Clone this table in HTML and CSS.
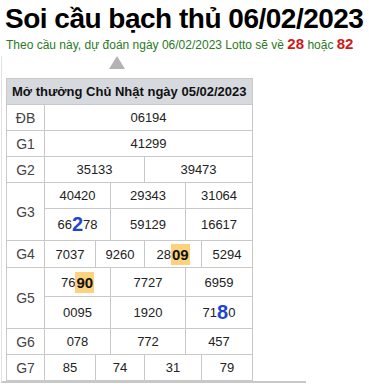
FILE: index.html
```html
<!DOCTYPE html>
<html lang="vi">

<head>
    <meta charset="UTF-8">
    <meta name="viewport" content="width=device-width, initial-scale=1.0">
    <title>Soi cầu bạch thủ 06/02/2023</title>
    <link rel="stylesheet" href="styles.css">
</head>

<body>
    <!-- Tiêu đề -->
    <h1 class="title">Soi cầu bạch thủ 06/02/2023</h1>
    <p class="predict">Theo cầu này, dự đoán ngày 06/02/2023 Lotto sẽ về <b>28</b> hoặc <b>82</b></p>

    <!-- Bảng kết quả -->
    <div class="result-box">
        <div class="arrow"></div>
        <div class="result">
            <div class="head">Mở thưởng Chủ Nhật ngày 05/02/2023</div>

            <div class="label">ĐB</div>
            <div class="cell s6">06194</div>

            <div class="label">G1</div>
            <div class="cell s6">41299</div>

            <div class="label">G2</div>
            <div class="cell s3">35133</div>
            <div class="cell s3">39473</div>

            <div class="label r2">G3</div>
            <div class="cell s2">40420</div>
            <div class="cell s2">29343</div>
            <div class="cell s2">31064</div>
            <div class="cell s2">66<span class="hit">2</span>78</div>
            <div class="cell s2">59129</div>
            <div class="cell s2">16617</div>

            <div class="label">G4</div>
            <div class="cell">7037</div>
            <div class="cell s2">9260</div>
            <div class="cell s2">28<span class="mark">09</span></div>
            <div class="cell">5294</div>

            <div class="label r2">G5</div>
            <div class="cell s2">76<span class="mark">90</span></div>
            <div class="cell s2">7727</div>
            <div class="cell s2">6959</div>
            <div class="cell s2">0095</div>
            <div class="cell s2">1920</div>
            <div class="cell s2">71<span class="hit">8</span>0</div>

            <div class="label">G6</div>
            <div class="cell s2">078</div>
            <div class="cell s2">772</div>
            <div class="cell s2">457</div>

            <div class="label">G7</div>
            <div class="cell">85</div>
            <div class="cell s2">74</div>
            <div class="cell s2">31</div>
            <div class="cell">79</div>
        </div>
    </div>
</body>

</html>
```
FILE: styles.css
```css
body {
    font-family: "Liberation Sans", Arial, sans-serif;
    margin: 0;
    padding: 0;
    background-color: #fff;
    color: #222;
}

/* Tiêu đề */
.title {
    margin: 0;
    padding: 2px 0 0 5px;
    font-size: 28px;
    line-height: 34px;
    letter-spacing: -0.5px;
    white-space: nowrap;
    color: #000;
}

.predict {
    margin: 0 0 0 6px;
    font-size: 12px;
    line-height: 16px;
    white-space: nowrap;
    color: #2b7a1d;
}

.predict b {
    font-size: 15px;
    color: #d01818;
}

/* Khung kết quả */
.result-box {
    margin: 3px 0 0 1px;
    border-left: 1px solid #e2e2e2;
    border-bottom: 2px solid #c8c8c8;
    padding: 0 0 0 4px;
    width: 300px;
}

.arrow {
    width: 0;
    height: 0;
    margin-left: 103px;
    border-left: 8px solid transparent;
    border-right: 8px solid transparent;
    border-bottom: 13px solid #b3b3b3;
    margin-bottom: 9px;
}

.result {
    display: grid;
    grid-template-columns: 37px 50px 14px 33px 40px 15px 50px;
    grid-template-rows: 25px 25px 25px 25px 25px 31px 26px 28px 31px 25px 25px;
    gap: 1px;
    padding: 1px;
    background-color: #c9c9c9;
    width: max-content;
    font-size: 13px;
}

.result .head {
    grid-column: span 7;
    background-color: #d6d9de;
    font-weight: bold;
    color: #111;
    display: flex;
    align-items: center;
    padding-left: 5px;
}

.result .label {
    background-color: #fff;
    display: flex;
    align-items: center;
    justify-content: center;
    font-size: 14px;
    color: #444;
}

.result .r2 {
    grid-row: span 2;
}

.result .cell {
    background-color: #fff;
    display: flex;
    align-items: center;
    justify-content: center;
    color: #222;
}

.result .s2 {
    grid-column: span 2;
}

.result .s3 {
    grid-column: span 3;
}

.result .s6 {
    grid-column: span 6;
}

.hit {
    font-size: 20px;
    font-weight: bold;
    color: #1c45d6;
}

.mark {
    display: inline-block;
    line-height: 21px;
    padding: 0 1px;
    background-color: #fcd27e;
    font-size: 15px;
    font-weight: bold;
    color: #111;
}
```
